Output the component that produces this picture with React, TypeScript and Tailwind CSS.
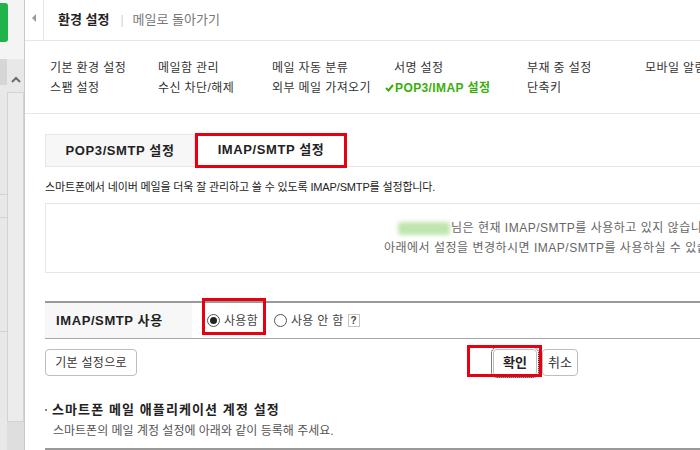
const menu: { label: string; active?: boolean }[][] = [
  [{ label: "기본 환경 설정" }, { label: "스팸 설정" }],
  [{ label: "메일함 관리" }, { label: "수신 차단/해제" }],
  [{ label: "메일 자동 분류" }, { label: "외부 메일 가져오기" }],
  [{ label: "서명 설정" }, { label: "POP3/IMAP 설정", active: true }],
  [{ label: "부재 중 설정" }, { label: "단축키" }],
  [{ label: "모바일 알림 설정" }],
];

const colWidths = ["w-[108px]", "w-[114px]", "w-[113px]", "w-[142px]", "w-[118px]", "w-[120px]"];

function Sidebar() {
  return (
    <div className="flex w-[25px] shrink-0 flex-col border-r border-[#c9c9c9] bg-[#e8e8e8]">
      <div className="h-[59px] bg-[#f4f4f4] pt-[3px]">
        <div className="h-[39px] w-[8px] rounded-r-[3px] bg-[#1fb34a]" />
      </div>
      <div className="flex flex-1">
        <div className="flex w-[7px] flex-col">
          <div className="h-[26px] bg-[#d6d6d6]" />
          <div className="h-[110px] border-b border-[#d2d2d2]" />
          <div className="h-[23px] border-b border-[#d2d2d2]" />
          <div className="h-[114px] border-b border-[#d2d2d2]" />
        </div>
        <div className="flex w-[17px] flex-col">
          <div className="flex h-[33px] items-center justify-center pt-[8px]">
            <svg width="10" height="7" viewBox="0 0 10 7">
              <path d="M1 6 L5 2 L9 6" stroke="#6b6b6b" strokeWidth="2" fill="none" />
            </svg>
          </div>
          <div className="h-[330px] border border-[#d3d3d3] bg-[#ececec]" />
          <div className="flex-1 bg-[#dedede]" />
        </div>
      </div>
    </div>
  );
}

function Radio({ checked }: { checked?: boolean }) {
  return (
    <span className="flex h-[13px] w-[13px] items-center justify-center rounded-full border border-[#555] bg-white">
      {checked && <span className="h-[7px] w-[7px] rounded-full bg-[#222]" />}
    </span>
  );
}

export default function App() {
  return (
    <div className="flex h-[450px] w-[700px] overflow-hidden bg-white font-['Liberation_Sans','Noto_Sans_CJK_KR',sans-serif] text-[#333]">
      <Sidebar />
      <div className="flex min-w-0 flex-1 flex-col">
        {/* header */}
        <div className="flex h-[41px] shrink-0 items-center border-b border-[#e6e6e6]">
          <div className="flex h-full w-[19px] items-center justify-center border-r border-[#e6e6e6] pb-[4px]">
            <span className="h-0 w-0 border-y-[4px] border-r-[4px] border-y-transparent border-r-[#9a9a9a]" />
          </div>
          <span className="ml-[14px] text-[13px] font-bold leading-[16px] text-[#222]">환경 설정</span>
          <span className="ml-[11px] mr-[9px] text-[12px] leading-[16px] text-[#d0d0d0]">|</span>
          <span className="text-[13px] leading-[16px] text-[#777]">메일로 돌아가기</span>
        </div>

        {/* menu */}
        <div className="flex h-[73px] shrink-0 border-b border-[#e6e6e6] pl-[25px] pt-[17px]">
          {menu.map((col, i) => (
            <div key={i} className={`${colWidths[i]} shrink-0 flex flex-col`}>
              {col.map((item) => (
                <div
                  key={item.label}
                  className={`flex h-[20px] items-center whitespace-nowrap text-[12px] tracking-[0.4px] ${
                    i === 3 && !item.active ? "pl-[9px]" : ""
                  } ${item.active ? "font-bold text-[#3aae0d]" : "text-[#333]"}`}
                >
                  {item.active && (
                    <svg width="9" height="8" viewBox="0 0 9 8" className="mr-[1px]">
                      <path d="M1 4 L3.5 6.5 L8 1" stroke="#3aae0d" strokeWidth="2" fill="none" />
                    </svg>
                  )}
                  {item.label}
                </div>
              ))}
            </div>
          ))}
        </div>

        {/* content */}
        <div className="flex flex-col pl-[20px] pt-[20px]">
          {/* tabs */}
          <div className="flex h-[33px] border-b border-[#e6e6e6]">
            <div className="flex w-[150px] items-center justify-center border border-b-0 border-[#e6e6e6] bg-[#f7f7f7] text-[13px] font-bold tracking-[0.6px] text-[#222]">
              POP3/SMTP 설정
            </div>
            <div className="relative flex w-[152px] items-center justify-center text-[13px] font-bold tracking-[0.6px] text-[#222]">
              <span className="absolute inset-x-0 top-[-1px] bottom-[-2px] border-[3px] border-[#e60012]" />
              IMAP/SMTP 설정
            </div>
          </div>

          <p className="mt-[13px] whitespace-nowrap text-[11px] leading-[14px] tracking-[-0.15px] text-[#222]">
            스마트폰에서 네이버 메일을 더욱 잘 관리하고 쓸 수 있도록 IMAP/SMTP를 설정합니다.
          </p>

          {/* info box */}
          <div className="mt-[9px] flex h-[70px] w-[720px] flex-col justify-center gap-[6px] border border-[#e6e6e6] text-[12px] leading-[14px] tracking-[0.5px] text-[#666]">
            <div className="flex items-center whitespace-nowrap pl-[352px]">
              <span className="mr-[1px] h-[13px] w-[52px] rounded-[3px] bg-[#bfe6ae] blur-[2px]" />
              님은 현재 IMAP/SMTP를 사용하고 있지 않습니다.
            </div>
            <div className="whitespace-nowrap pl-[338px]">
              아래에서 설정을 변경하시면 IMAP/SMTP를 사용하실 수 있습니다.
            </div>
          </div>

          {/* table */}
          <div className="mt-[28px] flex h-[38px] border-t-2 border-b border-t-[#999] border-b-[#a8a8a8]">
            <div className="flex w-[147px] items-center bg-[#f7f7f7] pl-[11px] text-[13px] font-bold tracking-[0.6px] text-[#222]">
              IMAP/SMTP 사용
            </div>
            <div className="flex items-center pl-[15px] text-[12px] tracking-[0.3px] text-[#444]">
              <label className="relative flex items-center gap-[4px]">
                <span className="absolute left-[-5px] right-[-8px] top-[-14px] bottom-[-5px] border-[3px] border-[#e60012]" />
                <Radio checked />
                사용함
              </label>
              <label className="ml-[16px] flex items-center gap-[4px]">
                <Radio />
                사용 안 함
              </label>
              <span className="ml-[4px] flex h-[13px] w-[12px] items-center justify-center border border-[#c4c4c4] text-[10px] font-bold leading-none text-[#444]">
                ?
              </span>
            </div>
          </div>

          {/* buttons */}
          <div className="mt-[10px] flex h-[27px] items-center">
            <button className="h-[27px] w-[92px] rounded-[4px] border border-[#bdbdbd] bg-white text-[12px] tracking-[0.3px] text-[#333]">
              기본 설정으로
            </button>
            <div className="relative ml-[356px] flex">
              <span className="absolute left-[-26px] right-[-5px] top-[-4px] bottom-[-1px] border-[3px] border-[#e60012]" />
              <button className="h-[27px] w-[44px] rounded-[4px] border border-[#bdbdbd] bg-white text-[13px] font-bold text-[#222] outline-dotted outline-1 outline-offset-[1px] outline-black">
                확인
              </button>
            </div>
            <button className="ml-[5px] h-[27px] w-[36px] rounded-[4px] border border-[#bdbdbd] bg-white text-[13px] text-[#333]">
              취소
            </button>
          </div>

          {/* section */}
          <div className="mt-[26px] flex items-center text-[13px] font-bold leading-[16px] tracking-[1.1px] text-[#222]">
            <span className="mr-[5px] h-[2px] w-[2px] bg-[#888]" />
            스마트폰 메일 애플리케이션 계정 설정
          </div>
          <div className="mt-[5px] pl-[8px] text-[12px] leading-[16px] text-[#555]">
            스마트폰의 메일 계정 설정에 아래와 같이 등록해 주세요.
          </div>
          <div className="mt-[9px] h-[3px] bg-[#999]" />
        </div>
      </div>
    </div>
  );
}
